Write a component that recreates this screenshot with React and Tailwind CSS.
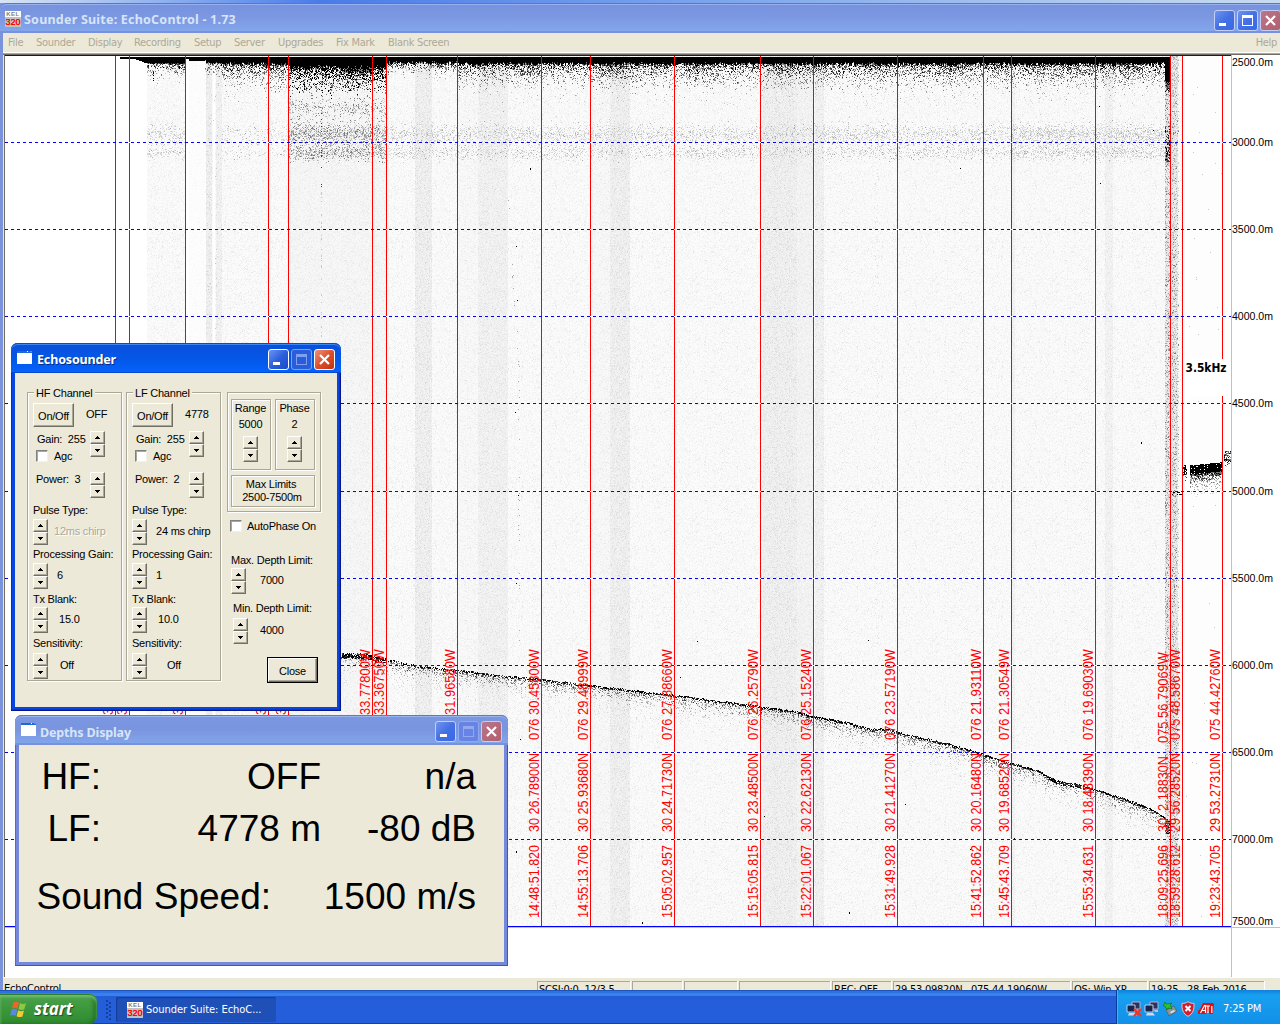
import React from "react";

/* ---------- echogram data ---------- */
function rng(seed) {
  let a = seed;
  return () => {
    a = (a + 0x6d2b79f5) | 0;
    let t = Math.imul(a ^ (a >>> 15), 1 | a);
    t = (t + Math.imul(t ^ (t >>> 7), 61 | t)) ^ t;
    return ((t ^ (t >>> 14)) >>> 0) / 4294967296;
  };
}

const FLOOR = [
  [330, 654], [365, 655], [386, 660], [420, 667], [457, 671], [500, 676], [541, 680], [590, 686], [630, 691],
  [674, 696], [720, 702], [760, 707], [800, 713], [813, 717], [850, 724], [872, 730], [885, 729], [897, 733],
  [920, 738], [950, 745], [983, 755], [1011, 764], [1035, 770], [1048, 777], [1062, 783], [1078, 785],
  [1095, 790], [1120, 798], [1150, 809], [1165, 819], [1171, 822],
];

function floorAt(x) {
  for (let i = 1; i < FLOOR.length; i++) {
    if (x <= FLOOR[i][0]) {
      const [x0, y0] = FLOOR[i - 1];
      const [x1, y1] = FLOOR[i];
      return y0 + ((x - x0) / (x1 - x0)) * (y1 - y0);
    }
  }
  return 822;
}

const SHADES = ["#000000", "#3c3c3c", "#7a7a7a", "#a8a8a8", "#c8c8c8", "#dadada"];

function surfaceEdge(x) {
  if (x < 120) return 0;
  if (x < 134) return 58;
  if (x < 147) return 58 + (x - 134) * 0.35;
  if (x < 185) return 63;
  if (x < 189) return 58;
  if (x < 206) return 60;
  if (x < 222) return 62;
  if (x < 288) return 63;
  if (x < 386) return 66;
  if (x < 457) return 62;
  if (x < 1165) return 63;
  if (x < 1171) return 82;
  return 0;
}

function buildSpecks() {
  const r = rng(7321);
  const out = SHADES.map(() => []);
  const put = (x, y, s) => out[s].push(`M${x} ${y}h1`);
  for (let x = 120; x < 1171; x++) {
    const e = Math.round(surfaceEdge(x) + (x > 222 ? r() * 3 - 1 : 0));
    out[0].push(`M${x}.5 56v${e - 56}`);
    if (x < 147 || (x > 184 && x < 205)) continue;
    const heavy = x >= 288 && x < 386;
    const light = x >= 386 && x < 457;
    const span = heavy ? 26 : light ? 12 : x < 222 ? 14 : 26;
    for (let y = e; y < e + span * 1.6; y++) {
      const d = (y - e) / span;
      const wave = 0.5 + 0.5 * Math.sin(x * 0.11) * Math.sin(x * 0.037 + 1);
      const p = (heavy ? 1.1 : 0.68) * Math.exp(-d * (heavy ? 2 : 1.9)) * (0.7 + 0.5 * wave) * (d > 0.95 ? 0.4 : 1);
      if (r() < p) put(x, y, heavy ? (r() < 0.75 - d * 0.5 ? 0 : 2) : Math.min(5, Math.floor(r() * 3.2 + d * 2.6)));
    }
  }
  /* scattering layers */
  for (let x = 147; x < 1170; x++) {
    if (x > 185 && x < 222) continue;
    const heavy = x >= 288 && x < 386;
    const k = heavy ? 0.6 : x < 185 ? 0.3 : x < 288 ? 0.14 : x > 1010 ? 0.5 : 0.32;
    for (let y = 98; y < 163; y++) {
      let g = Math.exp(-Math.pow((y - 134) / 8, 2)) + 0.8 * Math.exp(-Math.pow((y - 152) / 6, 2));
      if (heavy) g += 0.35 * Math.exp(-Math.pow((y - 108) / 7, 2)) + 0.1;
      if (r() < k * g) {
        const v = r();
        put(x, y, heavy ? (v < 0.15 ? 2 : v < 0.5 ? 3 : v < 0.8 ? 4 : 5) : v < 0.06 ? 3 : v < 0.35 ? 4 : 5);
      }
    }
  }
  /* sea floor */
  for (let x = 341; x < 1170; x++) {
    const f = Math.round(floorAt(x) + r() * 1.2 - 0.6);
    const thick = x < 386 ? 4 : x > 1048 && x < 1080 ? 3 : 1;
    for (let y = f - 1; y < f + thick; y++) if (r() < (x < 420 && x > 386 ? 0.4 : 0.75)) put(x, y, r() < 0.65 ? 0 : 1);
    for (let y = f + thick; y < f + 30; y++) {
      const d = (y - f) / 8;
      if (r() < 0.55 * Math.exp(-d)) put(x, y, Math.min(5, 1 + Math.floor(d * 1.5 + r() * 3.2)));
    }
  }
  /* surface columns at the channel change */
  for (let y = 82; y < 926; y++) {
    for (let x = 1165; x < 1179; x++) {
      if (x === 1171) continue;
      const near = (y > 125 && y < 162) || y < 92 || (y > 820 && y < 834);
      if (r() < (x < 1171 ? (near ? 0.75 : 0.42) : x < 1177 ? 0.38 : 0.15))
        put(x, y, near && x < 1171 ? Math.floor(r() * 3) : r() < 0.12 ? 2 : 3 + Math.floor(r() * 3));
    }
  }
  for (let y = 56; y < 82; y++)
    for (let x = 1172; x < 1179; x++) if (r() < 0.4) put(x, y, 3 + Math.floor(r() * 3));
  /* recent returns */
  for (let x = 1183; x < 1231; x++) {
    const edge = x < 1187 || x > 1222;
    const top = x < 1187 ? 465 : x < 1190 ? 999 : x < 1222 ? 465 - Math.floor((x - 1190) / 10) : x < 1224 ? 999 : 451;
    const t = edge ? 9 : 9;
    if (top === 999) continue;
    for (let y = top; y < top + 32; y++) {
      const d = y - top;
      if (d < t) {
        if (r() < (edge ? 0.6 : 0.93)) put(x, y, x > 1222 ? Math.floor(r() * 3) : 0);
      } else if (r() < Math.exp(-(d - t) / (edge ? 2 : 8))) put(x, y, Math.min(5, Math.floor(r() * 3 + (d - t) / 5)));
    }
  }
  for (let x = 1172; x < 1183; x++) for (let y = 491; y < 495; y++) if (r() < 0.45) put(x, y, 0);
  /* thin interference columns and stray hits */
  for (let y = 70; y < 645; y++) {
    if (r() < 0.2) put(321, y, y < 190 ? 1 : 4);
    if (r() < 0.13) put(207 + Math.floor(r() * 12), y, 4);
    if (r() < 0.07) put(500 + Math.floor(18 * Math.min(1, (y - 70) / 300) + r() * 2), y, 3);
    if (r() < 0.1) put(875 + Math.floor(r() * 4), y, 5);
  }
  [[153, 72], [153, 73], [153, 75], [153, 78], [153, 80], [1153, 130], [1099, 106], [1141, 442], [1141, 443], [530, 168], [530, 169], [680, 677],
    [516, 852], [516, 851], [642, 922], [642, 923], [849, 912], [849, 913], [764, 816], [1014, 838], [970, 849], [1100, 183], [960, 168], [520, 739],
    [516, 246], [517, 300], [515, 412], [518, 495], [516, 583], [697, 641], [868, 640], [1118, 576], [905, 804]].forEach(([x, y]) => put(x, y, 0));
  for (let i = 0; i < 40; i++) put(1186 + Math.floor(r() * 40), 80 + Math.floor(r() * 840), 4);
  return out.map((a) => a.join(""));
}

function buildTile(seed, density) {
  const r = rng(seed);
  const out = [[], [], []];
  for (let y = 0; y < 120; y++)
    for (let x = 0; x < 120; x++) if (r() < density) {
      const v = r();
      out[v < 0.5 ? 0 : v < 0.92 ? 1 : 2].push(`M${x} ${y + 0.5}h1`);
    }
  return out.map((a) => a.join(""));
}

const SPECKS = buildSpecks();
const TILE = buildTile(11, 0.45);
const TILE_DENSE = buildTile(29, 0.6);

/* x, width, opacity */
const BANDS = [
  [206, 6, 0.8], [216, 6, 0.6], [288, 98, 0.25], [415, 17, 0.7], [478, 30, 0.55], [457, 21, 0.12], [610, 20, 0.7],
  [763, 34, 0.7], [797, 16, 0.45], [815, 9, 0.6], [590, 20, 0.15], [1011, 4, 0.4], [1105, 8, 0.5], [1165, 13, 1],
];

const GRID = [142, 229, 316, 403, 491, 578, 665, 752, 839];
const MARKS = [
  [115, "076 38.91200W"], [129, "076 38.50210W"], [185, "076 36.87740W"], [268, "076 35.41270W"], [288, "076 35.02210W"],
  [372, "076 33.77800W"], [386, "076 33.36750W"], [457, "076 31.96580W"],
  [541, "076 30.45800W", "30 26.78900N", "14:48:51.820"],
  [590, "076 29.48999W", "30 25.93680N", "14:55:13.706"],
  [674, "076 27.88660W", "30 24.71730N", "15:05:02.957"],
  [760, "076 26.25790W", "30 23.48500N", "15:15:05.815"],
  [813, "076 25.15240W", "30 22.62130N", "15:22:01.067"],
  [897, "076 23.57190W", "30 21.41270N", "15:31:49.928"],
  [983, "076 21.93110W", "30 20.16480N", "15:41:52.862"],
  [1011, "076 21.30549W", "30 19.68520N", "15:45:43.709"],
  [1095, "076 19.69030W", "30 18.48390N", "15:55:34.631"],
  [1170, "075 56.79069W", "30  2.18830N", "18:09:25.696"],
  [1182, "075 48.58670W", "29 56.28520N", "18:59:28.612"],
  [1222, "075 44.42760W", "29 53.27310N", "19:23:43.705"],
];
const SCALE = [
  ["2500.0m", 66], ["3000.0m", 146], ["3500.0m", 233], ["4000.0m", 320], ["4500.0m", 407], ["5000.0m", 495],
  ["5500.0m", 582], ["6000.0m", 669], ["6500.0m", 756], ["7000.0m", 843], ["7500.0m", 925],
];

function Upright({ x, y, len, children }) {
  return (
    <text transform={`translate(${x} ${y}) rotate(-90)`} textLength={len} lengthAdjust="spacingAndGlyphs" className="whitespace-pre fill-[#ff0000] font-['Liberation_Sans',sans-serif] text-[14.5px]">
      {children}
    </text>
  );
}

function Echogram() {
  return (
    <svg width="1275" height="922" viewBox="5 55 1275 922" className="block shrink-0">
      <defs>
        <pattern id="fine" width="120" height="120" patternUnits="userSpaceOnUse">
          <rect width="120" height="120" fill="#fbfbfb" />
          <path d={TILE[0]} stroke="#f7f7f7" />
          <path d={TILE[1]} stroke="#f2f2f2" />
          <path d={TILE[2]} stroke="#e8e8e8" />
        </pattern>
        <pattern id="dense" width="120" height="120" patternUnits="userSpaceOnUse">
          <rect width="120" height="120" fill="#f0f0f0" />
          <path d={TILE_DENSE[0]} stroke="#e9e9e9" />
          <path d={TILE_DENSE[1]} stroke="#e0e0e0" />
          <path d={TILE_DENSE[2]} stroke="#cecece" />
        </pattern>
      </defs>
      <rect x="5" y="55" width="1275" height="922" fill="#ffffff" />
      <g shapeRendering="crispEdges">
        <rect x="147" y="56" width="38" height="870" fill="url(#fine)" />
        <rect x="189" y="56" width="982" height="870" fill="url(#fine)" />
        <rect x="1171" y="56" width="11" height="870" fill="url(#fine)" />
        <rect x="1190" y="56" width="32" height="870" fill="#fdfdfd" />
        <rect x="189" y="56" width="17" height="870" fill="#ffffff" opacity="0.6" />
        {BANDS.map(([x, w, o]) => <rect key={x} x={x} y="56" width={w} height="870" fill="url(#dense)" opacity={o} />)}
        <rect x="213" y="62" width="2" height="864" fill="#ffffff" />
        {SPECKS.map((d, i) => <path key={i} d={d} transform="translate(0 .5)" stroke={SHADES[i]} />)}
        <rect x="1184" y="358" width="46" height="38" fill="#ffffff" />
        {MARKS.map(([x]) => (
          <path key={x} stroke="#ff0000" d={x === 1222 ? "M1222.5 56V359M1222.5 396V926" : `M${x}.5 56V926`} />
        ))}
        {GRID.map((y) => (
          <g key={y}>
            {MARKS.map(([x]) => <rect key={x} x={x} y={y} width="1" height="1" fill="#ffffff" />)}
            <path d={`M5 ${y}.5H1231`} stroke="#0000ff" strokeDasharray="3 3" />
          </g>
        ))}
        <path d="M5 55.5H1231" stroke="#0000ff" />
        <path d="M5 927.5H1280M1231.5 55V977" stroke="#c0c0c0" />
        <path d="M5 926.5H1231" stroke="#0000ff" />
      </g>
      {MARKS.map(([x, w, n, t]) => (
        <g key={x}>
          <Upright x={x - 2} y={x === 1170 ? 743 : 740} len={91}>{w}</Upright>
          {n && <Upright x={x - 2} y={832} len={x === 1170 ? 76 : 79}>{n}</Upright>}
          {t && <Upright x={x - 2} y={918} len={73}>{t}</Upright>}
        </g>
      ))}
      {SCALE.map(([s, y]) => (
        <text key={s} x="1232" y={y} textLength="41" lengthAdjust="spacingAndGlyphs" className="fill-black font-['Liberation_Sans',sans-serif] text-[11.5px]">{s}</text>
      ))}
      <text x="1185.5" y="372" textLength="41" lengthAdjust="spacingAndGlyphs" className="fill-black font-['DejaVu_Sans_Condensed','DejaVu_Sans',sans-serif] text-[12px] font-bold">3.5kHz</text>
    </svg>
  );
}

/* ---------- window chrome ---------- */
function CaptionButton({ kind, active, dim }) {
  const base = "flex size-[21px] shrink-0 items-center justify-center rounded-[3px] border ";
  const tone =
    kind === "close"
      ? active
        ? "border-white bg-linear-to-br from-[#f09078] via-[#dd4f28] to-[#c03208]"
        : "border-[#c5cdf0] bg-linear-to-br from-[#b8768c] to-[#b0606c]"
      : dim
        ? active
          ? "border-[#7f9ff0] bg-[#2a5ddb]"
          : "border-[#93a8ee] bg-[#6584e4]"
        : active
          ? "border-white bg-linear-to-br from-[#6b93f3] via-[#2c5fdc] to-[#1c4ac8]"
          : "border-[#c3d0f5] bg-linear-to-br from-[#6f93ee] via-[#4470e4] to-[#3a69e6]";
  const ink = dim ? (active ? "#7f9ff0" : "#93a8ee") : "#ffffff";
  return (
    <div className={base + tone}>
      <svg width="19" height="19" viewBox="0 0 19 19" shapeRendering={kind === "close" ? "auto" : "crispEdges"}>
        {kind === "min" && <rect x="4" y="12" width="7" height="3" fill={ink} />}
        {kind === "max" && <path d="M4 4h11v11h-11zM5 7v7h9V7z" fillRule="evenodd" fill={ink} />}
        {kind === "close" && <path d="M5 5l9 9M14 5l-9 9" stroke={ink} strokeWidth="2.2" />}
      </svg>
    </div>
  );
}

function KelIcon() {
  return (
    <div className="flex h-4 w-4 shrink-0 flex-col items-center overflow-hidden bg-[#c0c0c0] font-['Liberation_Sans',sans-serif] leading-none">
      <div className="h-[6px] w-4 bg-white text-center text-[6px] leading-[6px] font-bold tracking-[0.5px] text-[#808080]">KEL</div>
      <div className="h-[10px] text-[9px] leading-[10px] text-[#ff0000] [text-shadow:0_0_0.5px_#ff0000]">320</div>
    </div>
  );
}

function FormIcon() {
  return (
    <svg width="16" height="13" viewBox="0 0 16 13" shapeRendering="crispEdges" className="mb-[2px] shrink-0">
      <rect width="15" height="12" x="0" y="1" fill="#ffffff" />
      <rect width="15" height="2" fill="#1a6ad8" />
      <rect x="10" width="1" height="1" fill="#ffffff" />
      <rect x="13" width="2" height="1" fill="#e86838" />
    </svg>
  );
}

/* ---------- dialog controls ---------- */
const RAISED = "border border-t-white border-l-white border-r-[#716f64] border-b-[#716f64] shadow-[inset_-1px_-1px_0_#aca899] bg-[#ece9d8]";

function Spin() {
  return (
    <div className="flex h-[26px] w-[15px] shrink-0 flex-col">
      {["M2 0h1v1h1v1h1v1h-5v-1h1v-1h1z", "M0 0h5v1h-1v1h-1v1h-1v-1h-1v-1h-1z"].map((d) => (
        <div key={d} className={"flex h-[13px] w-[15px] items-center justify-center " + RAISED}>
          <svg width="5" height="3" viewBox="0 0 5 3" shapeRendering="crispEdges"><path d={d} /></svg>
        </div>
      ))}
    </div>
  );
}

function Check() {
  return <div className="size-[12px] shrink-0 border border-t-[#808080] border-l-[#808080] border-r-[#f4f2e8] border-b-[#f4f2e8] bg-white shadow-[inset_1px_1px_0_#aca899]" />;
}

const ETCHED = "border border-[#aca899] shadow-[1px_1px_0_#ffffff,inset_1px_1px_0_#ffffff]";

function Setting({ label, value, gap, disabled, pad, head }) {
  return (
    <div className={"flex flex-col pl-[5px] " + pad}>
      <div className={"whitespace-nowrap " + head}>{label}</div>
      <div className="flex items-center">
        <Spin />
        <span className={gap + " pb-[2px]" + (disabled ? " text-[#aca899] [text-shadow:1px_1px_0_#fff]" : "")}>{value}</span>
      </div>
    </div>
  );
}

function Channel({ name, state, power, pulse, pulseGap, pulseOff, gain, blank, offGap }) {
  return (
    <div className={"flex h-[289px] w-[95px] flex-col " + ETCHED}>
      <div className="-mt-[7px] ml-[6px] h-[14px] w-fit bg-[#ece9d8] px-[2px]">{name}</div>
      <div className="mt-[3px] flex h-[25px] pl-[5px]">
        <div className={"flex h-[24px] w-[41px] items-center justify-center pt-[2px] " + RAISED}>On/Off</div>
        <div className="ml-[12px] pt-[4px]">{state}</div>
      </div>
      <div className="mt-[3px] flex h-[41px] pl-[8px]">
        <div className="w-[54px]">
          <div className="h-[17px] pt-[1px] pl-[1px] whitespace-nowrap">Gain: &nbsp;255</div>
          <div className="flex h-[15px] items-center gap-[6px]"><Check /><span className="pt-px">Agc</span></div>
        </div>
        <Spin />
      </div>
      <div className="flex h-[26px] pl-[8px]">
        <div className="w-[54px] whitespace-nowrap">Power: &nbsp;{power}</div>
        <Spin />
      </div>
      <Setting label="Pulse Type:" value={pulse} gap={pulseGap} disabled={pulseOff} pad="pt-[5px]" head="h-[16px]" />
      <Setting label="Processing Gain:" value={gain} gap="ml-[9px]" pad="pt-[2px]" head="h-[16px]" />
      <Setting label="Tx Blank:" value={blank} gap="ml-[11px]" pad="pt-[3px]" head="h-[15px]" />
      <Setting label="Sensitivity:" value="Off" gap={offGap} pad="pt-[3px]" head="h-[17px]" />
    </div>
  );
}

function Echosounder() {
  return (
    <div className="absolute top-[343px] left-[11px] flex h-[368px] w-[330px] flex-col rounded-t-[7px] bg-[#0a45e0] px-[4px] pb-[4px] shadow-[inset_-1px_-1px_0_#001590,inset_1px_0_0_#0a30c0,inset_-2px_-2px_0_#0836c8]">
      <div className="-mx-[4px] flex h-[30px] shrink-0 items-center rounded-t-[7px] bg-linear-to-b from-[#0a50d8] via-[#0358ea] via-60% to-[#0364fc] pl-[6px] pr-[6px] shadow-[inset_0_1px_0_#1848b8,inset_0_2px_0_#3a86f4,inset_0_-1px_0_#0148d0]">
        <FormIcon />
        <div className="ml-[4px] flex-1 pt-[5px] font-['Noto_Sans',sans-serif] text-[12.5px] font-bold tracking-[-0.15px] text-white [text-shadow:1px_1px_0_#0a2b86]">Echosounder</div>
        <div className="flex gap-[2px] pt-[2px]">
          <CaptionButton kind="min" active />
          <CaptionButton kind="max" active dim />
          <CaptionButton kind="close" active />
        </div>
      </div>
      <div className="flex flex-1 bg-[#ece9d8] pt-[19px] pl-[12px] font-['Liberation_Sans',sans-serif] text-[11px] leading-[14px] tracking-[-0.22px] text-black">
        <Channel name="HF Channel" state="OFF" power="3" pulse="12ms chirp" pulseGap="ml-[6px]" pulseOff gain="6" blank="15.0" offGap="ml-[12px]" />
        <div className="w-[4px]" />
        <Channel name="LF Channel" state="4778" power="2" pulse="24 ms chirp" pulseGap="ml-[9px]" gain="1" blank="10.0" offGap="ml-[20px]" />
        <div className="ml-[6px] flex w-[98px] flex-col">
          <div className={"flex h-[120px] w-[94px] flex-col px-[3px] pt-[6px] " + ETCHED}>
            <div className="flex gap-[4px]">
              {[["Range", "5000"], ["Phase", "2"]].map(([a, b]) => (
                <div key={a} className={"flex h-[71px] w-[40px] shrink-0 flex-col items-center pt-[1px] pr-[1px] " + ETCHED}>
                  <div className="h-[16px]">{a}</div>
                  <div className="h-[19px]">{b}</div>
                  <Spin />
                </div>
              ))}
            </div>
            <div className={"mt-[5px] flex h-[32px] w-[84px] flex-col items-center pt-[2px] pr-[2px] leading-[13px] " + ETCHED}>
              <div className="-ml-[2px]">Max Limits</div>
              <div>2500-7500m</div>
            </div>
          </div>
          <div className="mt-[7px] ml-[3px] flex items-center gap-[5px] whitespace-nowrap"><Check /><span>AutoPhase On</span></div>
          <div className="mt-[20px] ml-[4px] whitespace-nowrap">Max. Depth Limit:</div>
          <div className="mt-[1px] ml-[4px] flex items-center"><Spin /><span className="ml-[14px] pb-[2px]">7000</span></div>
          <div className="mt-[7px] ml-[6px] whitespace-nowrap">Min. Depth Limit:</div>
          <div className="mt-[3px] ml-[6px] flex items-center"><Spin /><span className="ml-[12px] pb-[2px]">4000</span></div>
          <div className="mt-[13px] ml-[40px] h-[26px] w-[51px] border border-black">
            <div className={"flex h-full w-full items-center justify-center pt-px " + RAISED}>Close</div>
          </div>
        </div>
      </div>
    </div>
  );
}

function DepthsDisplay() {
  return (
    <div className="absolute top-[715px] left-[15px] flex h-[251px] w-[493px] flex-col rounded-t-[7px] bg-[#7488dc] px-[4px] pb-[4px] shadow-[inset_-1px_-1px_0_#4c52b4,inset_1px_0_0_#5a66c4]">
      <div className="-mx-[4px] flex h-[30px] shrink-0 items-center rounded-t-[7px] bg-linear-to-b from-[#7b97e0] via-[#7a95e0] via-50% to-[#82a8ea] pl-[6px] pr-[6px] shadow-[inset_0_1px_0_#6076cc,inset_0_2px_0_#9ab4ee,inset_0_-2px_0_#7890e0]">
        <FormIcon />
        <div className="ml-[3px] flex-1 pt-[6px] font-['Noto_Sans',sans-serif] text-[12.5px] font-bold tracking-[-0.15px] text-[#d8e4f8]">Depths Display</div>
        <div className="flex gap-[2px] pt-[3px]">
          <CaptionButton kind="min" />
          <CaptionButton kind="max" dim />
          <CaptionButton kind="close" />
        </div>
      </div>
      <div className="flex flex-1 flex-col bg-[#ece9d8] pt-[9px] font-['Liberation_Sans',sans-serif] text-[37px] leading-[46px] text-black">
        <div className="flex h-[52px] text-right whitespace-nowrap"><div className="w-[82px]">HF:</div><div className="w-[220px]">OFF</div><div className="w-[155px]">n/a</div></div>
        <div className="flex h-[68px] text-right whitespace-nowrap"><div className="w-[82px]">LF:</div><div className="w-[220px]">4778 m</div><div className="w-[155px]">-80 dB</div></div>
        <div className="flex text-right whitespace-nowrap"><div className="w-[252px]">Sound Speed:</div><div className="w-[205px]">1500 m/s</div></div>
      </div>
    </div>
  );
}

/* ---------- main window ---------- */
const MENU = [
  ["File", "w-[28px]"], ["Sounder", "w-[52px]"], ["Display", "w-[46px]"], ["Recording", "w-[60px]"], ["Setup", "w-[40px]"],
  ["Server", "w-[44px]"], ["Upgrades", "w-[58px]"], ["Fix Mark", "w-[52px]"], ["Blank Screen", "flex-1"],
];
const STATUS = [
  ["SCSI:0:0, 12/3.5", "w-[93px]"], ["", "w-[50px] ml-[2px]"], ["", "w-[53px] ml-[2px]"], ["", "w-[91px] ml-[2px]"],
  ["REC: OFF", "w-[59px] ml-[2px]"], ["29 53.09820N\u00a0\u00a0 075 44.19060W", "w-[177px] ml-[2px]"],
  ["OS: Win XP", "w-[75px] ml-[2px]"], ["19:25\u00a0\u00a0 28-Feb-2016", "w-[115px] ml-[2px]"],
];

function Monitors({ off }) {
  return (
    <svg width="16" height="16" viewBox="0 0 16 16">
      <path d="M6 1h8v7h-8z" fill="#2c3458" stroke="#a8b4dc" />
      <path d="M1 4h8v7h-8z" fill="#1a2448" stroke="#c4cce8" />
      <path d="M3 12h6l2 2.5h-9z" fill="#d4d8ec" />
      <path d="M10 9h4v2h-3z" fill="#b8c0e0" />
      {off && <path d="M8 8l7 7M15 8l-7 7" stroke="#e8382c" strokeWidth="2.4" />}
    </svg>
  );
}

function Tray() {
  return (
    <div className="flex h-full w-[164px] items-center border-l border-[#0a3c9c] bg-linear-to-b from-[#0f80dc] via-[#18a0f0] via-15% to-[#1290e8] pt-[4px] pl-[9px] shadow-[inset_1px_0_0_#20c0f8]">
      <div className="flex gap-[2px]">
        <Monitors off />
        <Monitors />
        <svg width="16" height="16" viewBox="0 0 16 16">
          <path d="M4 9l8-4 3 5-8 5z" fill="#8c9498" stroke="#50585c" strokeWidth=".7" />
          <path d="M8 11l4-2 1 1.500-4 2z" fill="#dde" />
          <path d="M1 5l2-4 1 2 6-1-2 2 2 4-4-1-1 2-2-4z" fill="#30c030" stroke="#147814" strokeWidth=".7" />
        </svg>
        <svg width="16" height="16" viewBox="0 0 16 16">
          <path d="M8 .7c2 1.400 4 1.800 6 1.600.4 6-1 10.500-6 13-5-2.500-6.400-7-6-13 2 .2 4-.2 6-1.600z" fill="#d02030" stroke="#e0c8d0" />
          <path d="M5.500 5l5 5M10.500 5l-5 5" stroke="#fff" strokeWidth="2" />
        </svg>
        <svg width="17" height="16" viewBox="0 0 17 16">
          <path d="M5 2h10l1 1-1 10h-4v-2h-2l-1 2h-8v-3l2-2z" fill="#e01010" />
          <path d="M2.500 12l4-7.500h1v7.500M4.500 9.500h3M8 5h4M10 5v7M13.800 5v7" stroke="#fff" strokeWidth="1.200" fill="none" />
        </svg>
      </div>
      <div className="ml-[8px] pt-px font-['DejaVu_Sans_Condensed','DejaVu_Sans',sans-serif] text-[11px] tracking-[-0.25px] whitespace-nowrap text-white">7:25 PM</div>
    </div>
  );
}

export default function App() {
  return (
    <div className="relative flex h-[1024px] w-[1280px] flex-col overflow-hidden bg-[#7b92dc] font-['DejaVu_Sans_Condensed','DejaVu_Sans',sans-serif] text-[11px]">
      <div className="h-[3px] shrink-0 bg-linear-to-r from-[#d8e4f4] via-[#4a7ce8] via-25% to-[#c8dcf0]" />
      <div className="flex h-[30px] shrink-0 items-center rounded-tl-[6px] bg-linear-to-b from-[#7692de] via-[#7c98e2] via-50% to-[#84a8ec] pl-[5px] shadow-[inset_0_1px_0_#5c74cc,inset_0_2px_0_#98b0ee,inset_0_-2px_0_#7890e0]">
        <div className="pt-[2px]"><KelIcon /></div>
        <div className="ml-[3px] flex-1 pt-[5px] font-['Noto_Sans',sans-serif] text-[12.5px] font-bold tracking-[0.22px] text-[#d8e4f8]">Sounder Suite: EchoControl - 1.73</div>
        <div className="-mr-px flex gap-[2px] pt-[4px]">
          <CaptionButton kind="min" />
          <CaptionButton kind="max" />
          <CaptionButton kind="close" />
        </div>
      </div>
      <div className="flex min-h-0 flex-1 flex-col pl-[3px]">
        <div className="flex h-[19px] shrink-0 items-center bg-[#ece9d8] pt-[2px] pl-[5px] tracking-[-0.3px] text-[#aca899]">
          {MENU.map(([m, w]) => <div key={m} className={"shrink-0 whitespace-nowrap " + w}>{m}</div>)}
          <div className="pr-[3px]">Help</div>
        </div>
        <div className="h-px shrink-0 bg-white" />
        <div className="h-px shrink-0 bg-[#aca899]" />
        <div className="h-px shrink-0 bg-[#716f64]" />
        <div className="flex h-[922px] shrink-0 border-l border-[#ece9d8]">
          <div className="w-px shrink-0 bg-[#716f64]" />
          <Echogram />
        </div>
        <div className="flex h-[25px] shrink-0 border-t border-white bg-[#ece9d8] pt-[3px]">
          <div className="h-[16px] w-[534px] shrink-0 pl-[1px] leading-[16px] tracking-[-0.25px]">EchoControl</div>
          {STATUS.map(([s, w], i) => (
            <div key={i} className={"h-[20px] shrink-0 border-t border-l border-[#aca899] pl-[1px] leading-[15px] tracking-[-0.25px] whitespace-nowrap shadow-[1px_0_0_#fff] " + w}>{s}</div>
          ))}
        </div>
      </div>
      <div className="relative flex h-[34px] shrink-0 bg-linear-to-b from-[#1f5cc8] via-[#245edb] via-30% to-[#245edb] shadow-[inset_0_1px_0_#1c54bc,inset_0_3px_0_#2c72e0,inset_0_6px_0_#3a80ec,inset_0_-1px_0_#1840a0]">
        <div className="mt-[4px] flex h-[30px] w-[97px] items-center rounded-r-[8px] bg-linear-to-b from-[#4ca44c] via-[#3c963c] to-[#2f8c30] pl-[10px] shadow-[inset_0_1px_0_#2c7c2c,inset_0_3px_3px_#78c078,inset_-3px_0_4px_#206c20]">
          <svg width="19" height="19" viewBox="0 0 19 19">
            <path d="M3.500 2.500c2-1.300 4-1 5.500 0l-1.500 6.200c-2-1-3.800-1.200-5.700 0z" fill="#f06428" />
            <path d="M10 3c2 1.200 4 1.200 6 .2l-1.700 6.100c-2 1-4 .9-5.800-.2z" fill="#8cc840" />
            <path d="M1.500 9.700c2-1.200 3.800-1 5.700 0l-1.500 6c-2-1-3.800-1-5.600 0z" fill="#5888e8" />
            <path d="M8.200 10.300c2 1.100 3.800 1.100 5.800.1l-1.600 6c-2 1-4 .9-5.800-.2z" fill="#f8c830" />
          </svg>
          <span className="ml-[5px] font-['Open_Sans',sans-serif] text-[17px] font-bold tracking-[-0.1px] text-white italic [text-shadow:1px_1px_1px_#1c501c]">start</span>
        </div>
        <svg width="19" height="34" viewBox="97 990 19 34" shapeRendering="crispEdges">
          {[0, 1, 2, 3, 4].map((i) => (
            <path key={i} d={`M106 ${1000 + i * 4}h2v2h-2zM109 ${1002 + i * 4}h2v2h-2z`} fill="#1440a0" />
          ))}
        </svg>
        <div className="mt-[7px] flex h-[25px] w-[160px] items-center rounded-[2px] bg-[#1e50b8] pl-[11px] text-white shadow-[inset_1px_1px_1px_#143c94]">
          <KelIcon />
          <span className="ml-[3px] pt-[2px] tracking-[-0.05px] whitespace-nowrap">Sounder Suite: EchoC...</span>
        </div>
        <div className="flex-1" />
        <Tray />
      </div>
      <DepthsDisplay />
      <Echosounder />
    </div>
  );
}
